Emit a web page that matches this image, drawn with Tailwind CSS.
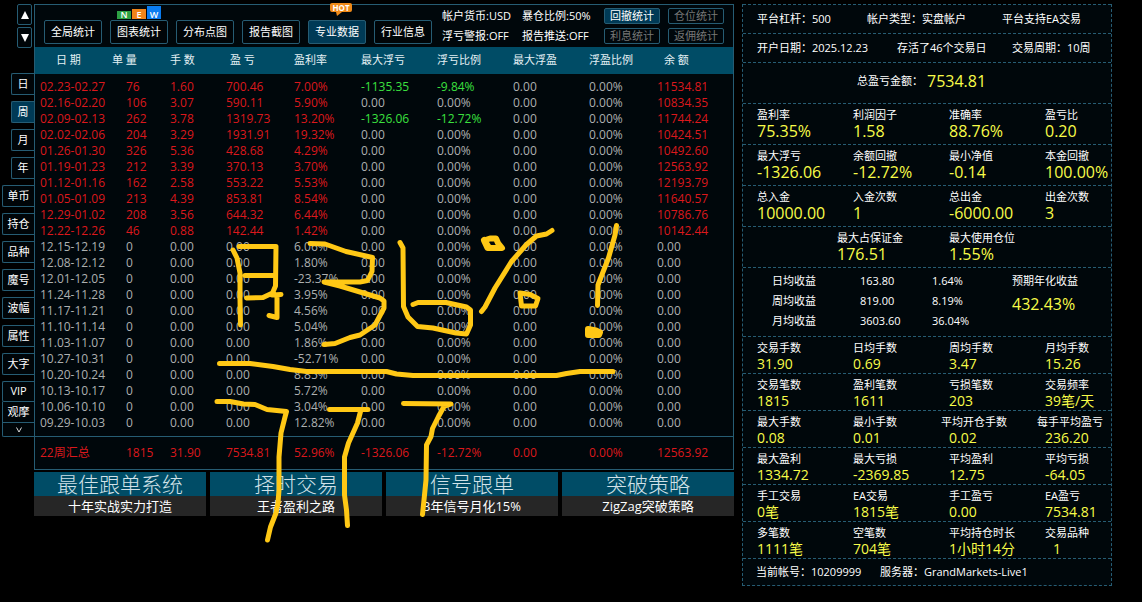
<!DOCTYPE html>
<html lang="zh-CN">
<head>
  <meta charset="UTF-8" />
  <meta name="viewport" content="width=device-width, initial-scale=1.0" />
  <title>专业数据 - 周统计</title>
  <script src="https://cdn.jsdelivr.net/npm/@tailwindcss/browser@4"></script>
</head>
<body class="relative bg-black font-['Open_Sans','Noto_Sans_CJK_SC',sans-serif] text-[11px] leading-4 text-white">
  <div class="flex items-start pt-1 pr-[30px]">

    <!-- Menú lateral -->
    <nav class="w-[34px] shrink-0 flex flex-col items-end">
      <div class="flex flex-col gap-[2px] pr-[2px] mb-[25px]">
        <button aria-label="上" class="w-[15px] h-[21px] flex items-center justify-center border border-[#265c73] rounded-xs bg-[#000508]">
          <svg class="w-2 h-2" viewBox="0 0 8 8" fill="white"><path d="M4 0 8 8H0z" /></svg>
        </button>
        <button aria-label="下" class="w-[15px] h-[21px] flex items-center justify-center border border-[#265c73] rounded-xs bg-[#000508]">
          <svg class="w-2 h-2" viewBox="0 0 8 8" fill="white"><path d="M0 0H8L4 8z" /></svg>
        </button>
      </div>
      <div id="tabs" class="flex flex-col items-end gap-[6px]"></div>
      <button class="w-8 h-[21px] border border-r-0 border-t-0 border-[#265c73] bg-[#000508]">观摩</button>
      <button aria-label="更多" class="w-8 h-[14px] flex items-center justify-center border border-r-0 border-t-0 border-[#265c73] rounded-bl-xs bg-[#000508]">
        <svg class="w-[6px] h-[6px]" viewBox="0 0 6 6" fill="none" stroke="#ddd"><path d="M.5.5 3 5 5.500.5" /></svg>
      </button>
    </nav>

    <main class="flex-1 min-w-0">
      <section class="border border-[#265c73] bg-[#00070b]">
        <!-- Barra superior -->
        <header class="h-[42px] flex items-start pl-[9px] pr-[9px] pt-[3px]">
          <div id="botones" class="flex gap-2 pt-3"></div>
          <div class="grid grid-cols-[80px_82px] gap-y-1 pl-[10px] whitespace-nowrap">
            <span>帐户货币:USD</span><span>暴仓比例:50%</span>
            <span>浮亏警报:OFF</span><span>报告推送:OFF</span>
          </div>
          <div class="grid grid-cols-[56px_56px] gap-x-2 gap-y-1">
            <button class="h-4 leading-[14px] border border-[#265c73] rounded-xs bg-[#003a56]">回撤统计</button>
            <button class="h-4 leading-[14px] border border-[#265c73] rounded-xs text-[#777]">仓位统计</button>
            <button class="h-4 leading-[14px] border border-[#265c73] rounded-xs text-[#777]">利息统计</button>
            <button class="h-4 leading-[14px] border border-[#265c73] rounded-xs text-[#777]">返佣统计</button>
          </div>
        </header>

        <table class="w-full table-fixed text-left whitespace-nowrap">
          <colgroup>
            <col class="w-[77px]" /><col class="w-[58px]" /><col class="w-[56px]" /><col class="w-[68px]" /><col class="w-[67px]" />
            <col class="w-[76px]" /><col class="w-[76px]" /><col class="w-[76px]" /><col class="w-[68px]" /><col />
          </colgroup>
          <thead class="bg-[#004c66] text-[#e4f0f4]">
            <tr class="h-[27px] *:font-normal *:pb-[2px]">
              <th class="pl-[21px]">日 期</th><th>单 量</th><th>手 数</th><th class="pl-1">盈 亏</th><th>盈利率</th>
              <th>最大浮亏</th><th>浮亏比例</th><th>最大浮盈</th><th>浮盈比例</th><th class="pl-[7px]">余 额</th>
            </tr>
          </thead>
          <tbody id="filas" class="text-xs leading-4 text-[#adb0b0] [&>tr:first-child>td]:pt-[5px] [&>tr:last-child>td]:pb-[5px]"></tbody>
          <tfoot class="text-xs leading-4 text-[#dc181c]">
            <tr class="h-8 border-t border-[#265c73]">
              <td class="pl-[5px]">22周汇总</td><td class="pl-[14px]">1815</td><td>31.90</td><td>7534.81</td><td>52.96%</td>
              <td>-1326.06</td><td>-12.72%</td><td>0.00</td><td>0.00%</td><td>12563.92</td>
            </tr>
          </tfoot>
        </table>
      </section>

      <!-- Anuncios -->
      <div class="grid grid-cols-4 gap-1 pt-[2px] text-center">
        <a href="#" class="bg-[#262626] text-[13px] leading-5"><span class="block h-6 bg-[#004c66] text-[21px] leading-6 font-light text-[#d2e2e8]">最佳跟单系统</span>十年实战实力打造</a>
        <a href="#" class="bg-[#262626] text-[13px] leading-5"><span class="block h-6 bg-[#004c66] text-[21px] leading-6 font-light text-[#d2e2e8]">择时交易</span>王者盈利之路</a>
        <a href="#" class="bg-[#262626] text-[13px] leading-5"><span class="block h-6 bg-[#004c66] text-[21px] leading-6 font-light text-[#d2e2e8]">信号跟单</span>3年信号月化15%</a>
        <a href="#" class="bg-[#262626] text-[13px] leading-5"><span class="block h-6 bg-[#004c66] text-[21px] leading-6 font-light text-[#d2e2e8]">突破策略</span>ZigZag突破策略</a>
      </div>
    </main>

    <!-- Datos de la cuenta -->
    <aside class="w-[370px] shrink-0 ml-2 border-x border-b border-dashed border-[#265c73] bg-[#00070b] whitespace-nowrap">
      <div class="h-[29px] grid grid-cols-[110px_135px_1fr] items-center pl-[14px] pb-px border-t border-dashed border-[#265c73]">
        <span>平台杠杆：500</span><span>帐户类型：实盘帐户</span><span>平台支持EA交易</span>
      </div>
      <div class="h-[29px] grid grid-cols-[140px_115px_1fr] items-center pl-[14px] pb-px border-t border-dashed border-[#265c73]">
        <span>开户日期：2025.12.23</span><span>存活了46个交易日</span><span>交易周期：10周</span>
      </div>
      <div class="h-[41px] grid grid-cols-[70px_1fr] items-center pl-[114px] pb-1 border-t border-dashed border-[#265c73]">
        <span>总盈亏金额：</span><span class="text-base leading-4 text-[#f8fc48]">7534.81</span>
      </div>
      <div id="grandes"></div>
      <div class="grid grid-cols-[106px_1fr] pl-[94px] pt-[3px] pb-[5px] border-t border-dashed border-[#265c73]">
        <div><p>最大占保证金</p><p class="text-base leading-4 text-[#f8fc48]">176.51</p></div>
        <div class="pl-[6px]"><p>最大使用仓位</p><p class="text-base leading-4 text-[#f8fc48]">1.55%</p></div>
      </div>
      <div class="h-[69px] flex items-start pl-[29px] pt-[3px] border-t border-dashed border-[#265c73]">
        <div class="grid grid-cols-[88px_72px_80px] leading-5">
          <span>日均收益</span><span>163.80</span><span>1.64%</span>
          <span>周均收益</span><span>819.00</span><span>8.19%</span>
          <span>月均收益</span><span>3603.60</span><span>36.04%</span>
        </div>
        <div class="leading-5"><p>预期年化收益</p><p class="pt-[3px] text-base leading-5 text-[#f8fc48]">432.43%</p></div>
      </div>
      <div id="chicas"></div>
      <div class="h-[27px] grid grid-cols-[124px_1fr] items-center pl-[13px] border-t border-dashed border-[#265c73]">
        <span>当前帐号：10209999</span><span>服务器：GrandMarkets-Live1</span>
      </div>
    </aside>
  </div>

  <!-- Trazos a mano sobre la tabla -->
  <svg class="absolute left-0 top-0 pointer-events-none" width="660" height="560" viewBox="0 0 660 560" fill="none" stroke="#ffc815" stroke-width="5" stroke-linecap="round" stroke-linejoin="round">
    <path d="M233 250 237 258 240 273V300L240.500 325M239 246.500H276L275.500 286 272.500 293 263 297.500 246.500 298M245 275.500H274M272 295 281 294.500M277 295V317.500L269 315.500" />
    <path d="M310 243.500 325 244 346 251.500 372.500 257.500 372 271.500 367.500 280.500 360 282H324L340 286 380 298 384 301V308L375 325 360 335 350 337.500 335 343.500 324 344.500" />
    <path d="M400 242.500 403 248 403.500 306.500 408 317 417.500 326.500 433 328 456 333 466.500 334 470.500 325V310L466.500 307 446 302.500H418L413 304.500" />
    <path d="M481.500 311.500 485 307 495 288 511.500 261.500 526.500 244.500 536.500 236 546.500 234 552 230.500" />
    <path d="M484 240.500 490 238.500H496L498 243 502 248H487.500ZM484 240 488 246" stroke-width="6" />
    <path d="M520 293 530 294.500 538 298.500 535.500 306H521.500Z" />
    <path d="M616.500 225.500 615 235 608.500 258 603 272 598 285 597.500 305.500" />
    <path d="M588 329 596 330.500 600 332.500 599 335H588Z" stroke-width="6" />
    <path d="M219.500 363.500H250L273 366.500 290 369.500 306.500 371.500H386.500L396.500 374 413 375.500H556.500L566.500 373.500 580 371.500H613" />
    <path d="M217 401.500H230L243.500 404 255 404.500 267 409.500 286.500 411.500 285 417 281 433 279 457V490L278 503 276 513 270.500 527 267.500 540" />
    <path d="M329.500 409.500H368M360.500 411.500 357.500 423 348.500 443 344.500 457V495L346.500 510 347.500 525.500" />
    <path d="M403.500 403.500 451 404 444 406.500 438.500 416.500 432.500 428.500 431 436.500 426.500 445 426 480 424 500 422.500 514.500" />
  </svg>

  <script>
    // Pestañas
    const tabs = ["日", "周", "月", "年", "单币", "持仓", "品种", "魔号", "波幅", "属性", "大字", "VIP"];
    document.getElementById("tabs").innerHTML = tabs.map(t => `
      <button class="${t.length === 1 ? 'w-[23px]' : 'w-8'} ${t === '周' ? 'bg-[#003a56]' : 'bg-[#000508]'} ${t === 'VIP' ? 'h-[21px]' : 'h-[22px]'} pb-px border border-r-0 border-[#265c73] rounded-l-xs">${t}</button>
    `).join('');

    // Botones de la barra
    const insignias = {
      "图表统计": `<span class="absolute left-[6px] -top-[15px] flex items-end gap-px text-[9px] leading-[8px] font-semibold">
          <span class="w-[14px] h-2 bg-[#2da044]">N</span>
          <span class="w-[14px] h-[10px] pt-[2px] bg-[#f08418]">E</span>
          <span class="w-[14px] h-[13px] pt-[5px] bg-[#0a7cf0]">W</span>
        </span>`,
      "专业数据": `<span class="absolute left-[21px] -top-[18px] w-[22px] h-[9px] rounded-xs bg-[#f08a18] text-[8px] leading-[9px] font-bold">HOT
          <svg class="absolute left-[6px] top-[9px]" width="6" height="4" viewBox="0 0 6 4" fill="#f08a18"><path d="M0 0H6L1 4z" /></svg>
        </span>`
    };
    const botones = ["全局统计", "图表统计", "分布点图", "报告截图", "专业数据", "行业信息"];
    document.getElementById("botones").innerHTML = botones.map(b => `
      <button class="relative w-[58px] h-6 border border-[#265c73] rounded-xs ${b === '专业数据' ? 'bg-[#003a56]' : 'bg-[#000508]'}">${b}${insignias[b] || ''}</button>
    `).join('');

    // Semanas con operaciones
    const semanas = [
      ["02.23-02.27", "76", "1.60", "700.46", "7.00%", "-1135.35", "-9.84%", "11534.81"],
      ["02.16-02.20", "106", "3.07", "590.11", "5.90%", "0.00", "0.00%", "10834.35"],
      ["02.09-02.13", "262", "3.78", "1319.73", "13.20%", "-1326.06", "-12.72%", "11744.24"],
      ["02.02-02.06", "204", "3.29", "1931.91", "19.32%", "0.00", "0.00%", "10424.51"],
      ["01.26-01.30", "326", "5.36", "428.68", "4.29%", "0.00", "0.00%", "10492.60"],
      ["01.19-01.23", "212", "3.39", "370.13", "3.70%", "0.00", "0.00%", "12563.92"],
      ["01.12-01.16", "162", "2.58", "553.22", "5.53%", "0.00", "0.00%", "12193.79"],
      ["01.05-01.09", "213", "4.39", "853.81", "8.54%", "0.00", "0.00%", "11640.57"],
      ["12.29-01.02", "208", "3.56", "644.32", "6.44%", "0.00", "0.00%", "10786.76"],
      ["12.22-12.26", "46", "0.88", "142.44", "1.42%", "0.00", "0.00%", "10142.44"]
    ];
    // Semanas vacías: solo cambia la fecha y el porcentaje
    const vacias = [
      ["12.15-12.19", "6.06%"], ["12.08-12.12", "1.80%"], ["12.01-12.05", "-23.37%"], ["11.24-11.28", "3.95%"],
      ["11.17-11.21", "4.56%"], ["11.10-11.14", "5.04%"], ["11.03-11.07", "1.86%"], ["10.27-10.31", "-52.71%"],
      ["10.20-10.24", "8.85%"], ["10.13-10.17", "5.72%"], ["10.06-10.10", "3.04%"], ["09.29-10.03", "12.82%"]
    ];
    vacias.forEach(([fecha, pct]) => semanas.push([fecha, "0", "0.00", "0.00", pct, "0.00", "0.00%", "0.00"]));

    document.getElementById("filas").innerHTML = semanas.map(f => {
      const rojo = f[1] !== "0" ? "text-[#dc181c]" : "";
      const verde = f[5] !== "0.00" ? "text-[#3be03f]" : "";
      return `
      <tr>
        <td class="pl-[5px] ${rojo}">${f[0]}</td><td class="pl-[14px] ${rojo}">${f[1]}</td><td class="${rojo}">${f[2]}</td>
        <td class="${rojo}">${f[3]}</td><td class="${rojo}">${f[4]}</td><td class="${verde}">${f[5]}</td>
        <td class="${verde}">${f[6]}</td><td>0.00</td><td>0.00%</td><td class="${rojo}">${f[7]}</td>
      </tr>`;
    }).join('');

    // Estadísticas
    const grandes = [
      [["盈利率", "75.35%"], ["利润因子", "1.58"], ["准确率", "88.76%"], ["盈亏比", "0.20"]],
      [["最大浮亏", "-1326.06"], ["余额回撤", "-12.72%"], ["最小净值", "-0.14"], ["本金回撤", "100.00%"]],
      [["总入金", "10000.00"], ["入金次数", "1"], ["总出金", "-6000.00"], ["出金次数", "3"]]
    ];
    const chicas = [
      [["交易手数", "31.90"], ["日均手数", "0.69"], ["周均手数", "3.47"], ["月均手数", "15.26"]],
      [["交易笔数", "1815"], ["盈利笔数", "1611"], ["亏损笔数", "203"], ["交易频率", "39笔/天"]],
      [["最大手数", "0.08"], ["最小手数", "0.01"], ["平均开仓手数", "0.02"], ["每手平均盈亏", "236.20"]],
      [["最大盈利", "1334.72"], ["最大亏损", "-2369.85"], ["平均盈利", "12.75"], ["平均亏损", "-64.05"]],
      [["手工交易", "0笔"], ["EA交易", "1815笔"], ["手工盈亏", "0.00"], ["EA盈亏", "7534.81"]],
      [["多笔数", "1111笔"], ["空笔数", "704笔"], ["平均持仓时长", "1小时14分"], ["交易品种", "1"]]
    ];
    const columnas = "grid grid-cols-[96px_96px_96px_1fr] pl-[14px] pt-[3px] border-t border-dashed border-[#265c73]";

    document.getElementById("grandes").innerHTML = grandes.map(fila => `
      <div class="${columnas} pb-[5px]">
        ${fila.map(([n, v]) => `<div><p>${n}</p><p class="text-base leading-4 text-[#f8fc48]">${v}</p></div>`).join('')}
      </div>`).join('');

    document.getElementById("chicas").innerHTML = chicas.map(fila => `
      <div class="${columnas} pb-[2px]">
        ${fila.map(([n, v]) => `<div>
          <p class="${n === '平均开仓手数' || n === '每手平均盈亏' ? '-ml-2' : ''}">${n}</p>
          <p class="text-sm leading-[15px] text-[#f8fc48] ${n === '交易品种' ? 'pl-2' : ''}">${v}</p>
        </div>`).join('')}
      </div>`).join('');
  </script>
</body>
</html>
